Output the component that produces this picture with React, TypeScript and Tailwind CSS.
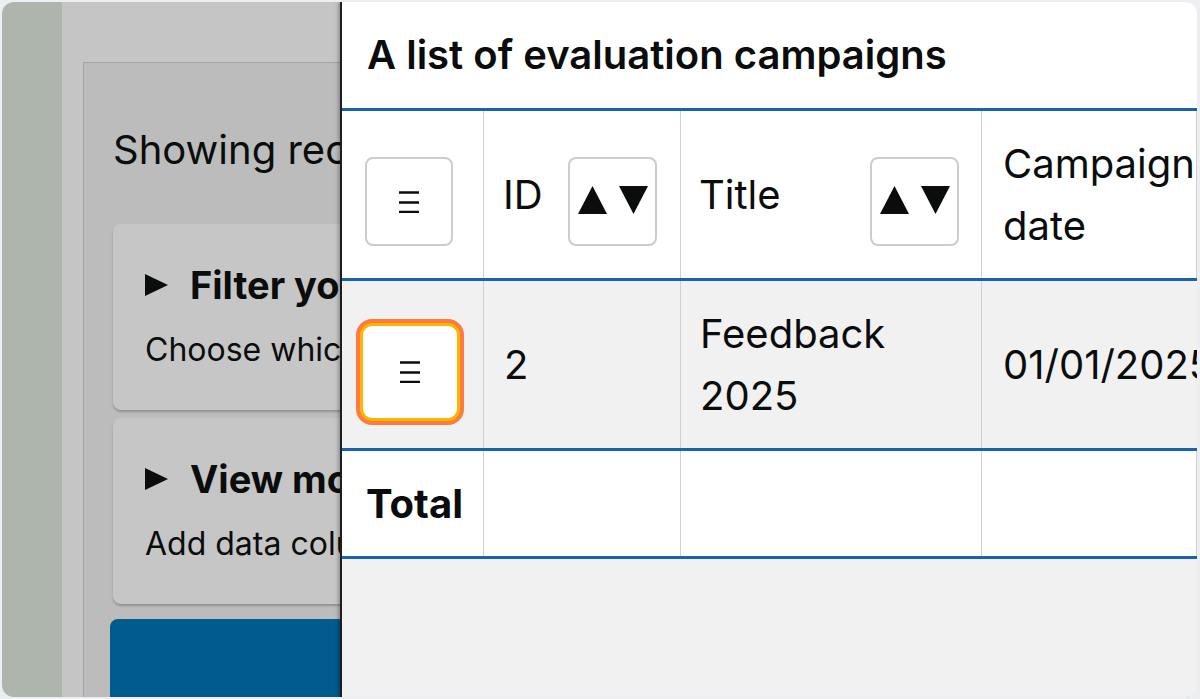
import React from 'react';

const ink = '#0b0c0c';

function Burger() {
    return (
        <svg width="22" height="22" viewBox="0 0 22 22" aria-hidden="true">
            <path d="M1 1.5h20M1 11.5h20M1 21h20" stroke={ink} strokeWidth="2.4" />
        </svg>
    );
}

function SortIcon() {
    return (
        <svg width="70" height="28" viewBox="0 0 70 28" aria-hidden="true">
            <polygon points="0,28 14.5,0 29,28" fill={ink} />
            <polygon points="41,0 70,0 55.5,28" fill={ink} />
        </svg>
    );
}

function Caret() {
    return (
        <svg width="23" height="22" viewBox="0 0 23 22" aria-hidden="true" className="shrink-0">
            <polygon points="0,0 23,11 0,22" fill={ink} />
        </svg>
    );
}

function DetailsCard({ title, hint }: { title: string; hint: string }) {
    return (
        <div className="w-[600px] h-[186px] ml-[29px] rounded-[8px] bg-[#c6c6c6] shadow-[0_2px_2px_rgba(0,0,0,0.22)] pl-[32px] pt-[38px]">
            <div className="flex items-center gap-[22px] text-[38px] leading-[46px] font-bold whitespace-nowrap">
                <Caret />
                <span>{title}</span>
            </div>
            <p className="mt-[22px] text-[32px] leading-[40px] whitespace-nowrap">{hint}</p>
        </div>
    );
}

export default function App() {
    return (
        <div className="h-screen w-full bg-[#eceef2] pt-[2px] pl-[2px] pr-[3px] pb-[2px] font-['Inter',sans-serif] text-[#0b0c0c]">
            <div className="h-full rounded-[12px] overflow-hidden flex">
                {/* dimmed page behind the drawer */}
                <div className="w-[338px] shrink-0 flex overflow-hidden">
                    <div className="w-[60px] shrink-0 bg-[#adb5ac]" />
                    <div className="flex-1 min-w-0 bg-[#c5c5c5] pl-[21px] pt-[60px]">
                        <div className="h-full w-[700px] border-l border-t border-[#a4a4a4] bg-[#bcbcbc] pt-[63px]">
                            <p className="ml-[29px] text-[40px] leading-[48px] whitespace-nowrap">Showing records for all campaigns</p>
                            <div className="mt-[50px] flex flex-col gap-[8px]">
                                <DetailsCard title="Filter your results" hint="Choose which campaigns to show" />
                                <DetailsCard title="View more columns" hint="Add data columns to the table" />
                            </div>
                            <div className="mt-[15px] ml-[26px] h-[120px] w-[600px] rounded-tl-[8px] bg-[#025b8d]" />
                        </div>
                    </div>
                </div>

                {/* table drawer */}
                <div className="flex-1 min-w-0 flex flex-col bg-[#f1f1f1] border-l-2 border-[#1e1e1e] shadow-[-2px_0_3px_rgba(0,0,0,0.25)] relative z-10 overflow-hidden">
                    <div className="h-[109px] shrink-0 bg-white flex items-center pl-[25px] text-[40px] font-semibold whitespace-nowrap border-b-[3px] border-[#1762b2]">
                        A list of evaluation campaigns
                    </div>

                    <div className="grid grid-cols-[142px_197px_301px_1fr] h-[170px] shrink-0 bg-white border-b-[3px] border-[#1762b2] text-[40px] leading-[62px]">
                        <div className="border-r border-[#d0d0d0] flex items-center pl-[23px] pt-[14px]">
                            <button className="w-[88px] h-[89px] rounded-[8px] border-2 border-[#cccccc] bg-white flex items-center justify-center">
                                <Burger />
                            </button>
                        </div>
                        <div className="border-r border-[#d0d0d0] flex items-center justify-between pl-[19px] pr-[23px]">
                            <span>ID</span>
                            <button className="mt-[14px] w-[89px] h-[89px] rounded-[8px] border-2 border-[#cccccc] bg-white flex items-center justify-center pb-[4px]">
                                <SortIcon />
                            </button>
                        </div>
                        <div className="border-r border-[#d0d0d0] flex items-center justify-between pl-[18px] pr-[22px]">
                            <span>Title</span>
                            <button className="mt-[14px] w-[89px] h-[89px] rounded-[8px] border-2 border-[#cccccc] bg-white flex items-center justify-center pb-[4px]">
                                <SortIcon />
                            </button>
                        </div>
                        <div className="border-r border-[#d0d0d0] flex items-center pl-[21px] whitespace-nowrap">
                            <span>Campaign<br />date</span>
                        </div>
                    </div>

                    <div className="grid grid-cols-[142px_197px_301px_1fr] h-[170px] shrink-0 bg-[#f1f1f1] border-b-[3px] border-[#1762b2] text-[40px] leading-[62px]">
                        <div className="border-r border-[#d0d0d0] flex items-center pl-[21px] pt-[14px]">
                            <button className="w-[94px] h-[92px] rounded-[9px] bg-white shadow-[0_0_0_3px_#ffb400,0_0_0_7px_#ff7a3d] flex items-center justify-center">
                                <Burger />
                            </button>
                        </div>
                        <div className="border-r border-[#d0d0d0] flex items-center pl-[20px]">2</div>
                        <div className="border-r border-[#d0d0d0] flex items-center pl-[19px] pr-[20px]">
                            <span>Feedback<br />2025</span>
                        </div>
                        <div className="border-r border-[#d0d0d0] flex items-center pl-[21px] whitespace-nowrap">01/01/2025</div>
                    </div>

                    <div className="grid grid-cols-[142px_197px_301px_1fr] h-[108px] shrink-0 bg-white border-b-[3px] border-[#1762b2] text-[40px] leading-[62px]">
                        <div className="border-r border-[#d0d0d0] flex items-center pl-[24px] font-bold">Total</div>
                        <div className="border-r border-[#d0d0d0]" />
                        <div className="border-r border-[#d0d0d0]" />
                        <div className="border-r border-[#d0d0d0]" />
                    </div>
                </div>
            </div>
        </div>
    );
}
